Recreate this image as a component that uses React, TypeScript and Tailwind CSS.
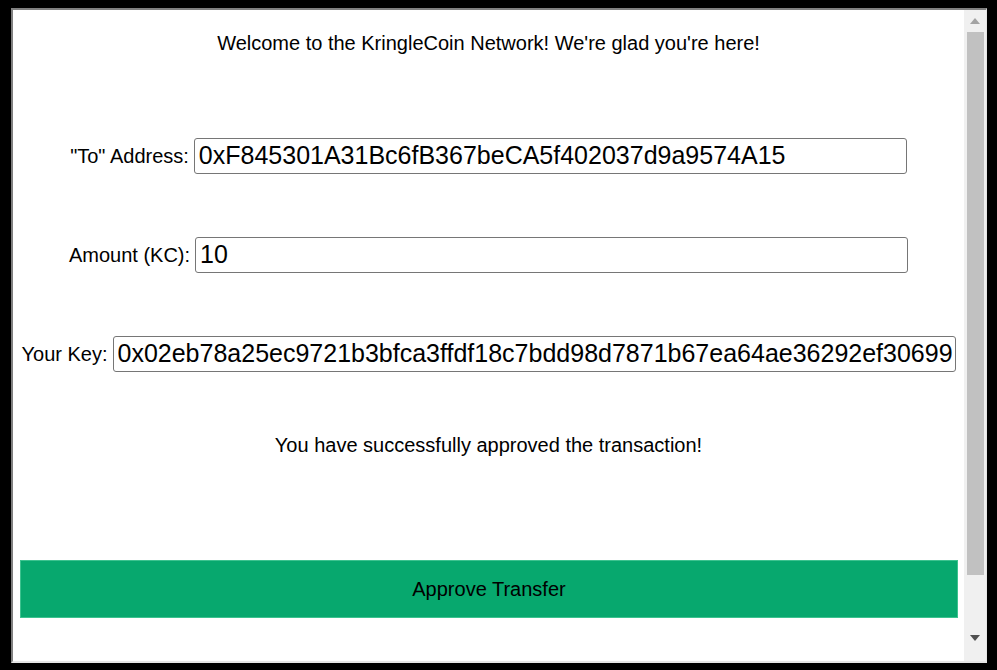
import React from "react";

const font = { fontFamily: '"Liberation Sans", Arial, sans-serif' };

// One label + input row, centred in the page.
function Field({ label, value, width }: { label: string; value: string; width: string }) {
  return (
    <div className="flex items-center justify-center gap-[5px]">
      <span className="text-[20px] leading-[23px] text-black">{label}</span>
      <input
        readOnly
        value={value}
        className={`h-[36px] ${width} rounded-[3px] border border-[#767676] bg-white pl-[4px] pr-0 text-[25px] text-black outline-none`}
        style={font}
      />
    </div>
  );
}

export default function App() {
  return (
    <div className="h-[670px] w-[997px] bg-black pl-[11px] pt-[8px] pr-[10px] pb-[7px]" style={font}>
      <div className="flex h-full border-t-2 border-l-2 border-r border-b-2 border-t-[#808080] border-l-[#808080] border-r-[#e6e6e6] border-b-[#e6e6e6]">
        <div className="flex flex-1 flex-col bg-white">
          <p className="mt-[22px] text-center text-[20px] leading-[23px] text-black">
            Welcome to the KringleCoin Network! We're glad you're here!
          </p>
          <div className="mt-[83px]">
            <Field label={'"To" Address:'} value="0xF845301A31Bc6fB367beCA5f402037d9a9574A15" width="w-[713px]" />
          </div>
          <div className="mt-[63px]">
            <Field label="Amount (KC):" value="10" width="w-[713px]" />
          </div>
          <div className="mt-[63px]">
            <Field
              label="Your Key:"
              value="0x02eb78a25ec9721b3bfca3ffdf18c7bdd98d7871b67ea64ae36292ef30699"
              width="w-[843px]"
            />
          </div>
          <p className="mt-[62px] text-center text-[20px] leading-[23px] text-black">
            You have successfully approved the transaction!
          </p>
          <button className="ml-[7px] mr-[6px] mt-[103px] h-[58px] border border-[#3cc28f] bg-[#07a86e] text-[20px] text-black">
            Approve Transfer
          </button>
        </div>
        <div className="flex w-[22px] flex-col items-center bg-[#f0f0f0]">
          <div className="flex h-[22px] w-full items-center justify-center">
            <svg width="10" height="6" viewBox="0 0 10 6">
              <path d="M0 6 L5 0 L10 6 Z" fill="#a3a3a3" />
            </svg>
          </div>
          <div className="h-[543px] w-[17px] bg-[#c1c1c1]" />
          <div className="flex flex-1 items-center justify-center">
            <svg width="10" height="6" viewBox="0 0 10 6" className="mt-[40px]">
              <path d="M0 0 L10 0 L5 6 Z" fill="#505050" />
            </svg>
          </div>
        </div>
      </div>
    </div>
  );
}
